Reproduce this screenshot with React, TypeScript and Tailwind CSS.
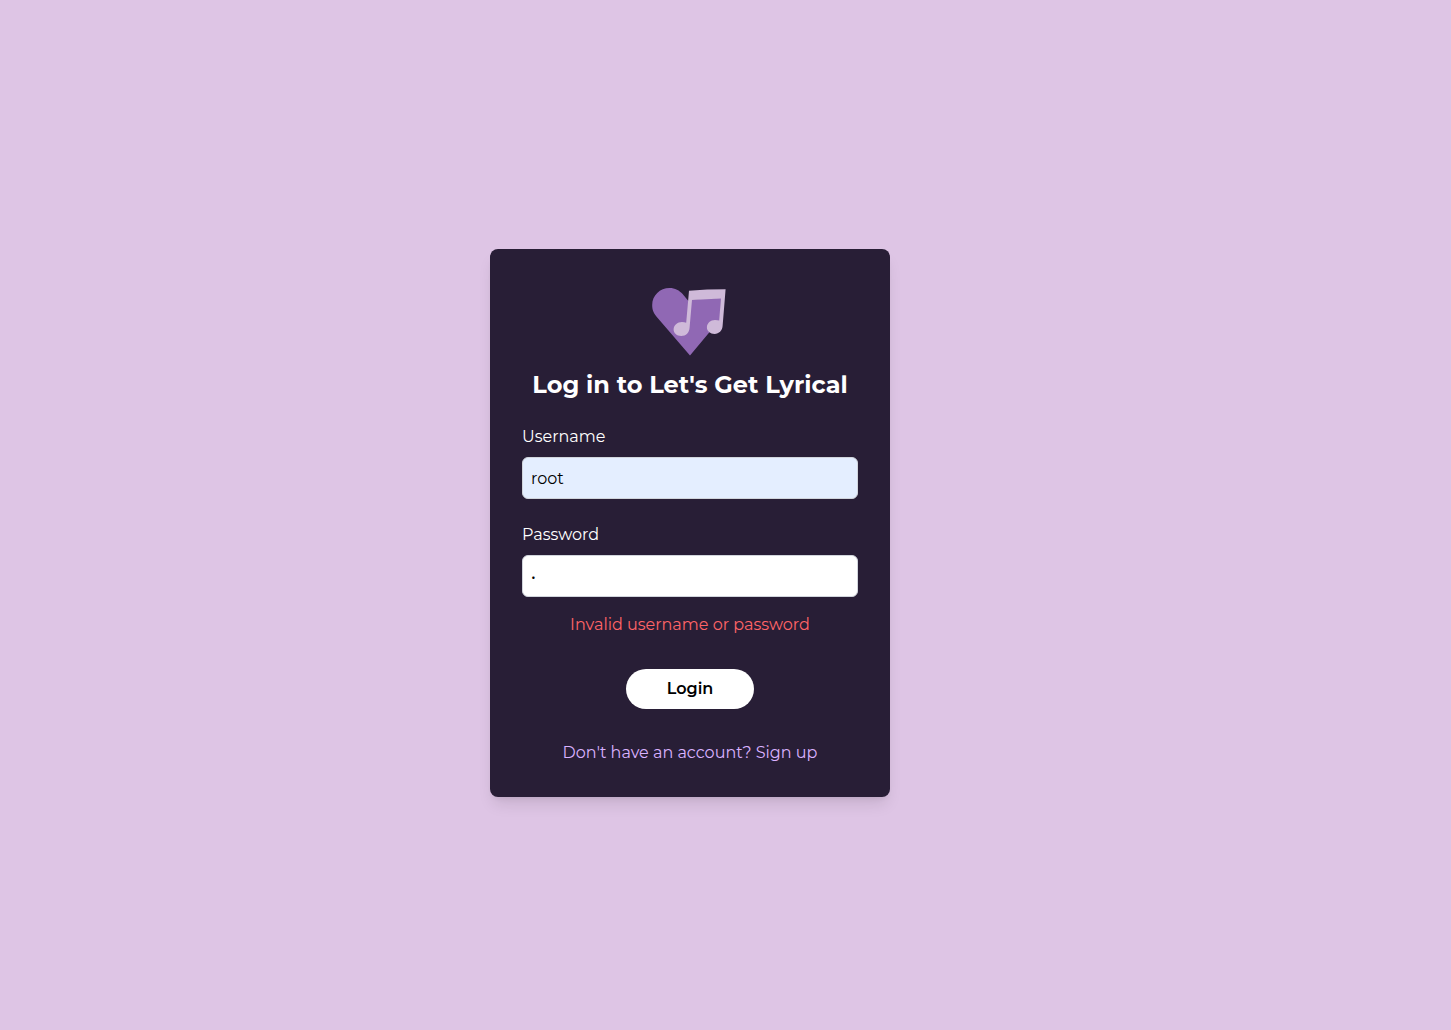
import { useState } from "react";

function Logo() {
  return (
    <svg viewBox="0 0 80 80" className="size-20" role="img" aria-label="Let's Get Lyrical">
      <path
        d="M40 74.4 L6.6 35.7 C2.8 31 2.2 28 2.2 24 C2.2 14.5 10 7 19.5 7 C25 7 29.6 9.6 32.6 13 L38.6 20.2 L42.5 18.5 L71 16.8 L70.5 41 L59 51.7 Z"
        fill="#9068b4"
      />
      <path
        d="M39 9.7 Q57 8.3 75.6 8.3 L72.6 45 C72.2 49.5 69 52.9 64.6 52.9 C60.2 52.9 56.9 50 56.9 46.2 C56.9 42.2 60.6 39 65 39 Q67.6 39 69.2 39.6 L70.9 17.5 L42 19 L39.6 46.4 C39.4 51.5 36 54.9 31.2 54.9 C26.8 54.9 23.6 52 23.6 48.4 C23.6 44.4 27.4 41 32 41 Q34.4 41 36.2 41.7 Z"
        fill="#cfbad9"
      />
    </svg>
  );
}

const inputClass =
  "block h-[42px] w-full rounded-md border border-gray-300 px-2 text-black outline-none";

export default function App() {
  const [username, setUsername] = useState("root");
  const [password, setPassword] = useState("1");

  return (
    <main className="flex min-h-screen items-center justify-center bg-[#dec5e5] pt-4 pr-[71px] font-[Montserrat,Inter,sans-serif] text-base">
      <form
        className="flex w-full max-w-[400px] flex-col items-center rounded-lg bg-[#281e36] p-8 shadow-lg"
        onSubmit={(e) => e.preventDefault()}
      >
        <Logo />
        <h1 className="mt-2 mb-6 text-2xl font-bold whitespace-nowrap text-white">
          Log in to Let's Get Lyrical
        </h1>
        <div className="mb-6 w-full">
          <label htmlFor="username" className="mb-2 block text-white">
            Username
          </label>
          <input
            id="username"
            type="text"
            value={username}
            onChange={(e) => setUsername(e.target.value)}
            className={`${inputClass} bg-[#e4eeff]`}
          />
        </div>
        <div className="w-full">
          <label htmlFor="password" className="mb-2 block text-white">
            Password
          </label>
          <input
            id="password"
            type="password"
            value={password}
            onChange={(e) => setPassword(e.target.value)}
            className={`${inputClass} bg-white`}
          />
        </div>
        <p role="alert" className="mt-4 text-[#ff6467]">
          Invalid username or password
        </p>
        <button type="submit" className="my-8 h-10 w-32 rounded-full bg-white font-semibold text-black">
          Login
        </button>
        <a href="#signup" className="text-[#dab2ff]">
          Don't have an account? Sign up
        </a>
      </form>
    </main>
  );
}
